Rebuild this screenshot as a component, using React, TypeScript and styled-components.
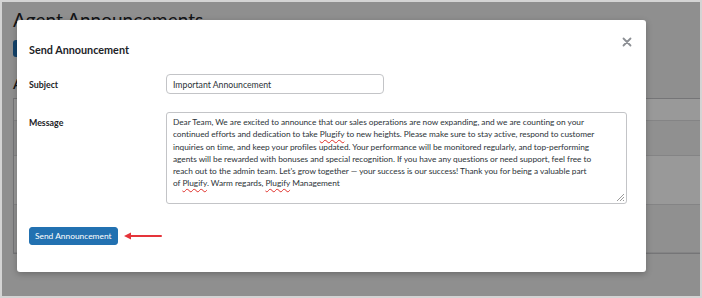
import React from 'react'
import styled, { createGlobalStyle } from 'styled-components'

const GlobalStyle = createGlobalStyle`
  html, body {
    margin: 0;
    padding: 0;
    background: #8f8f8f;
  }
  * {
    box-sizing: border-box;
  }
`

const font = `Lato, 'Open Sans', 'Liberation Sans', sans-serif`

const Screen = styled.div`
  position: relative;
  width: 702px;
  height: 298px;
  overflow: hidden;
  border: 2px solid #d4d4d4;
  background: #eeeeee;
  font-family: ${font};
`

const Page = styled.div`
  display: flex;
  flex-direction: column;
  padding: 6px 0 0 11px;
`

const PageTitle = styled.h1`
  margin: 0;
  font-size: 19px;
  font-weight: 400;
  color: #1d2327;
  line-height: 24px;
`

const AddButton = styled.div`
  margin-top: 8px;
  width: 120px;
  height: 17px;
  border-radius: 3px;
  background: #2271b1;
`

const SectionTitle = styled.h2`
  margin: 18px 0 0;
  font-size: 14px;
  font-weight: 600;
  color: #1d2327;
  line-height: 18px;
`

const Table = styled.div`
  margin-top: 5px;
  display: flex;
  flex-direction: column;
  border: 1px solid #c3c4c7;
  border-right: none;
  background: #ffffff;
`

const TableRow = styled.div<{ $h: number; $alt?: boolean }>`
  height: ${(p) => p.$h}px;
  background: ${(p) => (p.$alt ? '#ffffff' : '#f0f0f1')};
  border-bottom: 1px solid #dcdcde;
`

const Overlay = styled.div`
  position: absolute;
  inset: 0;
  background: rgba(0, 0, 0, 0.4);
`

const Modal = styled.div`
  position: absolute;
  left: 15px;
  top: 18px;
  width: 629px;
  height: 252px;
  background: #ffffff;
  border-radius: 3px;
  box-shadow: 0 2px 6px rgba(0, 0, 0, 0.25);
  padding: 22px 19px 0 12px;
  display: flex;
  flex-direction: column;
`

const Header = styled.div`
  display: flex;
  align-items: center;
  justify-content: space-between;
`

const Title = styled.h3`
  margin: 0;
  font-size: 10.8px;
  font-weight: 700;
  line-height: 16px;
  color: #1d2327;
`

const Close = styled.button`
  border: none;
  background: none;
  padding: 0;
  margin: -17px -5px 0 0;
  width: 10px;
  height: 10px;
  display: flex;
  cursor: pointer;
`

const Form = styled.div`
  margin-top: 16px;
  display: flex;
  flex-direction: column;
  gap: 18px;
`

const Row = styled.div`
  display: flex;
  align-items: flex-start;
`

const Label = styled.label<{ $top: number }>`
  width: 137px;
  flex-shrink: 0;
  padding-top: ${(p) => p.$top}px;
  font-size: 8.8px;
  font-weight: 700;
  color: #1d2327;
  line-height: 12px;
`

const Input = styled.div`
  width: 218px;
  height: 20px;
  border: 1px solid #c3c4c7;
  border-radius: 4px;
  padding: 0 6px;
  display: flex;
  align-items: center;
  font-size: 8.7px;
  color: #2c3338;
`

const TextArea = styled.div`
  position: relative;
  width: 461px;
  height: 92px;
  border: 1px solid #c3c4c7;
  border-radius: 3px;
  padding: 3px 6px;
  font-size: 8.3px;
  letter-spacing: -0.03px;
  line-height: 12.3px;
  color: #2c3338;
  white-space: nowrap;
`

const Line = styled.div``

const Misspelled = styled.span`
  text-decoration: underline wavy #e0302a;
  text-decoration-thickness: 0.7px;
  text-underline-offset: 2px;
`

const Grip = styled.svg`
  position: absolute;
  right: 1px;
  bottom: 1px;
`

const Footer = styled.div`
  margin-top: 23px;
  display: flex;
  align-items: center;
  gap: 5px;
`

const PrimaryButton = styled.button`
  height: 18px;
  padding: 0 5px;
  border: 1px solid #2271b1;
  border-radius: 3px;
  background: #2271b1;
  color: #ffffff;
  font-family: ${font};
  font-size: 8.4px;
  line-height: 16px;
  cursor: pointer;
`

const lines: string[] = [
  'Dear Team, We are excited to announce that our sales operations are now expanding, and we are counting on your',
  'continued efforts and dedication to take Plugify to new heights. Please make sure to stay active, respond to customer',
  'inquiries on time, and keep your profiles updated. Your performance will be monitored regularly, and top-performing',
  'agents will be rewarded with bonuses and special recognition. If you have any questions or need support, feel free to',
  "reach out to the admin team. Let's grow together \u2014 your success is our success! Thank you for being a valuable part",
  'of Plugify. Warm regards, Plugify Management',
]

const renderLine = (text: string) =>
  text.split(/(Plugify)/).map((part, i) =>
    part === 'Plugify' ? <Misspelled key={i}>{part}</Misspelled> : <React.Fragment key={i}>{part}</React.Fragment>
  )

const App = () => {
  return (
    <>
      <GlobalStyle />
      <Screen>
        <Page>
          <PageTitle>Agent Announcements</PageTitle>
          <AddButton />
          <SectionTitle>All Announcements</SectionTitle>
          <Table>
            <TableRow $h={22} $alt />
            <TableRow $h={35} />
            <TableRow $h={49} $alt />
            <TableRow $h={48} />
          </Table>
        </Page>
        <Overlay />
        <Modal>
          <Header>
            <Title>Send Announcement</Title>
            <Close aria-label="Close">
              <svg width="10" height="10" viewBox="0 0 10 10">
                <path d="M1.5 1.5 L8.5 8.5 M8.5 1.5 L1.5 8.5" stroke="#8c8f94" strokeWidth="1.8" strokeLinecap="round" />
              </svg>
            </Close>
          </Header>
          <Form>
            <Row>
              <Label $top={5}>Subject</Label>
              <Input>Important Announcement</Input>
            </Row>
            <Row>
              <Label $top={5}>Message</Label>
              <TextArea>
                {lines.map((l, i) => (
                  <Line key={i}>{renderLine(l)}</Line>
                ))}
                <Grip width="9" height="9" viewBox="0 0 9 9">
                  <path d="M8 1 L1 8 M8 4 L4 8 M8 7 L7 8" stroke="#9a9a9a" strokeWidth="1" />
                </Grip>
              </TextArea>
            </Row>
          </Form>
          <Footer>
            <PrimaryButton>Send Announcement</PrimaryButton>
            <svg width="40" height="10" viewBox="0 0 40 10">
              <path d="M6 5 L38 5" stroke="#e5343a" strokeWidth="2" strokeLinecap="round" />
              <path d="M1 5 L8 1.5 L8 8.5 Z" fill="#e5343a" />
            </svg>
          </Footer>
        </Modal>
      </Screen>
    </>
  )
}

export default App
